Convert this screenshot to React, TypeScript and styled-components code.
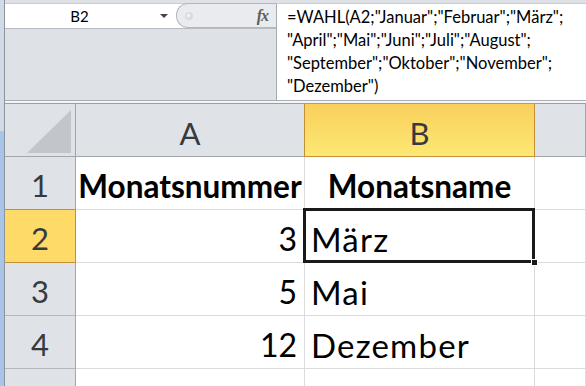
import { Fragment } from "react";
import styled, { createGlobalStyle } from "styled-components";

const GlobalStyle = createGlobalStyle`
  html, body {
    margin: 0;
    padding: 0;
    background: #ffffff;
    overflow: hidden;
  }
`;

const Window = styled.div`
  display: flex;
  width: 586px;
  height: 386px;
  overflow: hidden;
  background: #ffffff;
  font-family: Lato, "Open Sans", "Liberation Sans", sans-serif;
`;

const SideEdge = styled.div`
  flex: none;
  width: 4px;
  background: linear-gradient(#d2dae5 0 131px, #a8c5e8 131px);
  border-right: 1px solid #8e949c;
`;

const Workspace = styled.div`
  flex: 1;
  display: flex;
  flex-direction: column;
  min-width: 0;
`;

const FormulaBar = styled.div`
  flex: none;
  display: flex;
  height: 100px;
  padding-top: 3px;
  box-sizing: border-box;
  background: #dee1e6;
`;

const LeftPane = styled.div`
  flex: none;
  width: 271px;
  display: flex;
  flex-direction: column;
  border-top: 1px solid #c9ccd1;
`;

const NameRow = styled.div`
  display: flex;
  height: 24px;
  border-bottom: 1px solid #b8bcc2;
  background: #ffffff;
`;

const NameBox = styled.div`
  position: relative;
  width: 171px;
  display: flex;
  align-items: center;
  justify-content: center;
  padding-right: 22px;
  box-sizing: border-box;
  font-size: 15px;
  color: #000;
`;

const DropArrow = styled.span`
  position: absolute;
  right: 8px;
  top: 10px;
  width: 0;
  height: 0;
  border-left: 4px solid transparent;
  border-right: 4px solid transparent;
  border-top: 4px solid #444;
`;

const FxZone = styled.div`
  flex: 1;
  display: flex;
  align-items: center;
  justify-content: space-between;
  padding: 0 6px 0 8px;
  background: #e9ebee;
  border: 1px solid #b3b8be;
  border-right: none;
  border-radius: 12px 0 0 12px;
  margin-top: -1px;
`;

const Knob = styled.span`
  width: 6px;
  height: 6px;
  border-radius: 50%;
  background: radial-gradient(circle at 40% 40%, #fafafa, #c4c7cc);
  border: 1px solid #d4d7db;
`;

const FxLabel = styled.span`
  font-family: "Liberation Serif", "DejaVu Serif", serif;
  font-style: italic;
  font-weight: bold;
  font-size: 16px;
  color: #5a5d62;
  letter-spacing: -1px;
  margin-right: 2px;
`;

const FormulaText = styled.div`
  flex: 1;
  background: #ffffff;
  border-left: 1px solid #a7abb1;
  border-top: 1px solid #c9ccd1;
  padding: 2px 0 0 10px;
  font-size: 16.5px;
  line-height: 23px;
  color: #000;
  white-space: nowrap;
`;

const Divider = styled.div`
  flex: none;
  height: 2px;
  background: #f4f5f7;
  border-top: 1px solid #a9adb4;
  border-bottom: 1px solid #9a9ea5;
`;

const Sheet = styled.div`
  display: grid;
  grid-template-columns: 71px 229px 230px 1fr;
  grid-auto-rows: 53px;
`;

const Corner = styled.div`
  box-sizing: border-box;
  display: flex;
  align-items: flex-end;
  justify-content: flex-end;
  padding: 0 4px 3px 0;
  background: #dfe2e7;
  border-right: 1px solid #a3a7ad;
  border-bottom: 1px solid #a3a7ad;
`;

const ColHead = styled.div<{ $active?: boolean }>`
  box-sizing: border-box;
  display: flex;
  align-items: center;
  justify-content: center;
  padding-top: 5px;
  font-size: 31px;
  color: #363a3e;
  background: ${(p) =>
    p.$active ? "linear-gradient(#f9cf5c, #fde874)" : "#dfe2e7"};
  border-right: 1px solid ${(p) => (p.$active ? "#c58f35" : "#a3a7ad")};
  border-bottom: 1px solid ${(p) => (p.$active ? "#c58f35" : "#a3a7ad")};
  ${(p) => (p.$active ? "margin-left: -1px; border-left: 1px solid #c58f35;" : "")}
`;

const RowHead = styled.div<{ $active?: boolean }>`
  box-sizing: border-box;
  display: flex;
  align-items: center;
  justify-content: center;
  padding-top: 3px;
  font-size: 31px;
  color: #363a3e;
  background: ${(p) => (p.$active ? "#fedb68" : "#dfe2e7")};
  border-right: 1px solid ${(p) => (p.$active ? "#c58f35" : "#a3a7ad")};
  border-bottom: 1px solid ${(p) => (p.$active ? "#c58f35" : "#b4b8bd")};
  ${(p) => (p.$active ? "margin-top: -1px; border-top: 1px solid #c58f35;" : "")}
`;

const Cell = styled.div<{
  $align?: "left" | "right" | "center";
  $bold?: boolean;
  $selected?: boolean;
}>`
  position: relative;
  box-sizing: border-box;
  display: flex;
  align-items: center;
  justify-content: ${(p) =>
    p.$align === "right" ? "flex-end" : p.$align === "center" ? "center" : "flex-start"};
  padding: 5px 7px 0 ${(p) => (p.$align === "left" ? "6px" : "7px")};
  font-size: ${(p) => (p.$bold ? "31.5px" : p.$align === "left" ? "33px" : "32px")};
  letter-spacing: ${(p) => (p.$align === "left" ? "1.2px" : "0")};
  font-weight: ${(p) => (p.$bold ? 700 : 400)};
  color: #000;
  white-space: nowrap;
  border-right: 1px solid #d9dbdd;
  border-bottom: 1px solid #d9dbdd;

  ${(p) =>
    p.$selected
      ? `
    &::after {
      content: "";
      position: absolute;
      top: -2px;
      left: -2px;
      right: -1px;
      bottom: -1px;
      border: 3px solid #1a1a1a;
    }
    &::before {
      content: "";
      position: absolute;
      right: -4px;
      bottom: -4px;
      width: 5px;
      height: 5px;
      background: #1a1a1a;
      border: 1px solid #fff;
      z-index: 1;
    }
  `
      : ""}
`;

const formula = [
  '=WAHL(A2;"Januar";"Februar";"März";',
  '"April";"Mai";"Juni";"Juli";"August";',
  '"September";"Oktober";"November";',
  '"Dezember")',
];

type Row = { n: number; a: string; b: string; header?: boolean };

const rows: Row[] = [
  { n: 1, a: "Monatsnummer", b: "Monatsname", header: true },
  { n: 2, a: "3", b: "März" },
  { n: 3, a: "5", b: "Mai" },
  { n: 4, a: "12", b: "Dezember" },
  { n: 5, a: "", b: "" },
];

export default function App() {
  return (
    <>
      <GlobalStyle />
      <Window>
        <SideEdge />
        <Workspace>
          <FormulaBar>
            <LeftPane>
              <NameRow>
                <NameBox>
                  B2
                  <DropArrow />
                </NameBox>
                <FxZone>
                  <Knob />
                  <FxLabel>fx</FxLabel>
                </FxZone>
              </NameRow>
            </LeftPane>
            <FormulaText>
              {formula.map((line) => (
                <div key={line}>{line}</div>
              ))}
            </FormulaText>
          </FormulaBar>
          <Divider />
          <Sheet>
            <Corner>
              <svg width="44" height="43" viewBox="0 0 44 43">
                <polygon points="0,43 44,43 44,0" fill="#c2c6cb" />
              </svg>
            </Corner>
            <ColHead>A</ColHead>
            <ColHead $active>B</ColHead>
            <ColHead />
            {rows.map((r) => (
              <Fragment key={r.n}>
                <RowHead $active={r.n === 2}>{r.n}</RowHead>
                <Cell $align={r.header ? "center" : "right"} $bold={r.header}>
                  {r.a}
                </Cell>
                <Cell
                  $align={r.header ? "center" : "left"}
                  $bold={r.header}
                  $selected={r.n === 2}
                >
                  {r.b}
                </Cell>
                <Cell />
              </Fragment>
            ))}
          </Sheet>
        </Workspace>
      </Window>
    </>
  );
}
